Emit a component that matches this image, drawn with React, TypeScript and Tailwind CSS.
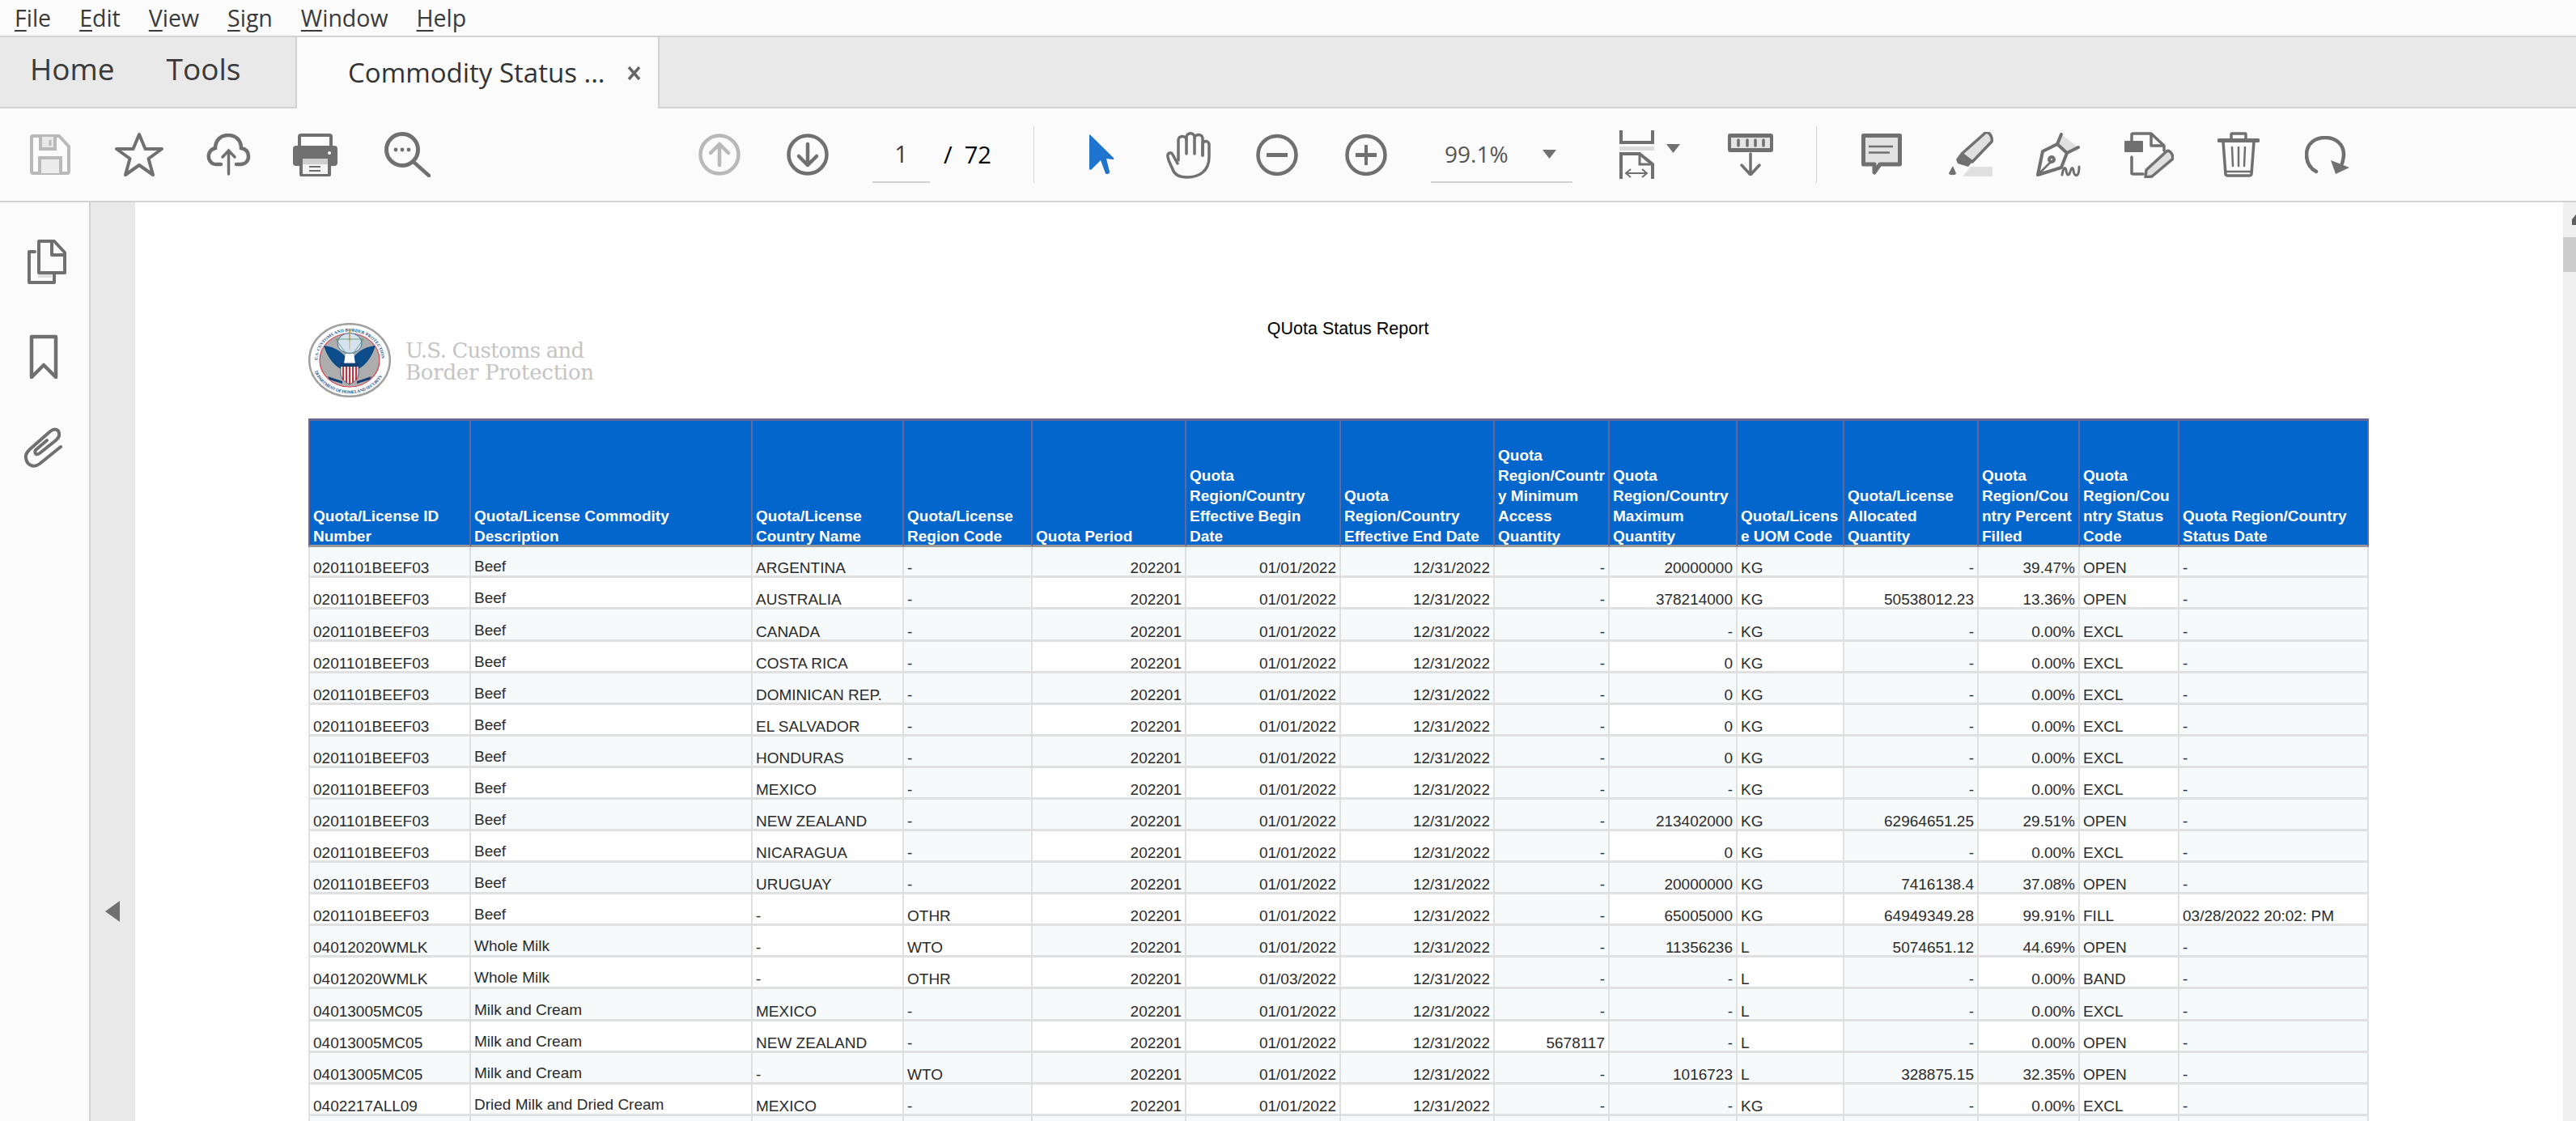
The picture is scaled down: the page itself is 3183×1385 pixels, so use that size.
import React from "react";

const G = "#707070";
const MENU = ["File", "Edit", "View", "Sign", "Window", "Help"];

const HEAD = [
  ["Quota/License ID", "Number"],
  ["Quota/License Commodity", "Description"],
  ["Quota/License", "Country Name"],
  ["Quota/License", "Region Code"],
  ["Quota Period"],
  ["Quota", "Region/Country", "Effective Begin", "Date"],
  ["Quota", "Region/Country", "Effective End Date"],
  ["Quota", "Region/Countr", "y Minimum", "Access", "Quantity"],
  ["Quota", "Region/Country", "Maximum", "Quantity"],
  ["Quota/Licens", "e UOM Code"],
  ["Quota/License", "Allocated", "Quantity"],
  ["Quota", "Region/Cou", "ntry Percent", "Filled"],
  ["Quota", "Region/Cou", "ntry Status", "Code"],
  ["Quota Region/Country", "Status Date"],
];
const WIDTHS = [201, 348, 187, 159, 190, 191, 190, 142, 158, 132, 166, 125, 123, 234];
const RIGHT = [4, 5, 6, 7, 8, 10, 11];
const HEIGHTS = [38, 39, 40, 39, 39, 39, 39, 39, 39, 39, 39, 39, 39, 39, 40, 39, 39, 39, 39];

const row = (id: string, name: string, country: string, region: string, begin: string, min: string, max: string, uom: string, alloc: string, pct: string, status: string, date = "-") => [
  id, name, country, region, "202201", begin, "12/31/2022", min, max, uom, alloc, pct, status, date,
];
const B = "0201101BEEF03";
const D = "01/01/2022";
const ROWS = [
  row(B, "Beef", "ARGENTINA", "-", D, "-", "20000000", "KG", "-", "39.47%", "OPEN"),
  row(B, "Beef", "AUSTRALIA", "-", D, "-", "378214000", "KG", "50538012.23", "13.36%", "OPEN"),
  row(B, "Beef", "CANADA", "-", D, "-", "-", "KG", "-", "0.00%", "EXCL"),
  row(B, "Beef", "COSTA RICA", "-", D, "-", "0", "KG", "-", "0.00%", "EXCL"),
  row(B, "Beef", "DOMINICAN REP.", "-", D, "-", "0", "KG", "-", "0.00%", "EXCL"),
  row(B, "Beef", "EL SALVADOR", "-", D, "-", "0", "KG", "-", "0.00%", "EXCL"),
  row(B, "Beef", "HONDURAS", "-", D, "-", "0", "KG", "-", "0.00%", "EXCL"),
  row(B, "Beef", "MEXICO", "-", D, "-", "-", "KG", "-", "0.00%", "EXCL"),
  row(B, "Beef", "NEW ZEALAND", "-", D, "-", "213402000", "KG", "62964651.25", "29.51%", "OPEN"),
  row(B, "Beef", "NICARAGUA", "-", D, "-", "0", "KG", "-", "0.00%", "EXCL"),
  row(B, "Beef", "URUGUAY", "-", D, "-", "20000000", "KG", "7416138.4", "37.08%", "OPEN"),
  row(B, "Beef", "-", "OTHR", D, "-", "65005000", "KG", "64949349.28", "99.91%", "FILL", "03/28/2022 20:02: PM"),
  row("04012020WMLK", "Whole Milk", "-", "WTO", D, "-", "11356236", "L", "5074651.12", "44.69%", "OPEN"),
  row("04012020WMLK", "Whole Milk", "-", "OTHR", "01/03/2022", "-", "-", "L", "-", "0.00%", "BAND"),
  row("04013005MC05", "Milk and Cream", "MEXICO", "-", D, "-", "-", "L", "-", "0.00%", "EXCL"),
  row("04013005MC05", "Milk and Cream", "NEW ZEALAND", "-", D, "5678117", "-", "L", "-", "0.00%", "OPEN"),
  row("04013005MC05", "Milk and Cream", "-", "WTO", D, "-", "1016723", "L", "328875.15", "32.35%", "OPEN"),
  row("0402217ALL09", "Dried Milk and Dried Cream", "MEXICO", "-", D, "-", "-", "KG", "-", "0.00%", "EXCL"),
  Array(14).fill(""),
];

// which body cells carry the pale tint: odd rows, plus dashes on even rows
const tinted = (r: number, c: number, v: string) => {
  if (c === 2 && (r === 11 || r === 13)) return false;
  if (r === 12 && (c === 2 || c === 3)) return false;
  return r % 2 === 0 || v === "-";
};

const Seal = () => (
  <svg width="102" height="92" viewBox="0 0 102 92">
    <defs>
      <path id="sealTop" d="M11.500 46 A39.500 35.500 0 0 1 90.500 46" />
      <path id="sealBottom" d="M7.700 60 A46 41 0 0 0 94.300 60" />
    </defs>
    <ellipse cx="51" cy="46" rx="49.800" ry="44.800" fill="#fff" stroke="#a0a0a0" strokeWidth="2.600" />
    <text fontFamily="Liberation Serif, serif" fontSize="5.600" fontWeight="700" fill="#1c5390">
      <textPath href="#sealTop" textLength="116">U.S. CUSTOMS AND BORDER PROTECTION</textPath>
    </text>
    <text fontFamily="Liberation Serif, serif" fontSize="5.400" fontWeight="700" fill="#1c5390">
      <textPath href="#sealBottom" textLength="102">DEPARTMENT OF HOMELAND SECURITY</textPath>
    </text>
    <ellipse cx="51" cy="46" rx="37" ry="33" fill="#adadad" stroke="#d8434f" strokeWidth="1.200" />
    <ellipse cx="51" cy="25" rx="15" ry="12.500" fill="#d4e3ef" stroke="#3c76a8" />
    <path d="M34 20 L68 20 L51 44Z" fill="none" stroke="#5e8a5a" strokeWidth="0.800" />
    <path d="M50 8 L52 8 L51 38Z" fill="#b59a45" />
    <path d="M19 28 C28 29 38 32 46 42 L44 58 C34 56 24 44 19 28Z" fill="#0c4c8a" />
    <path d="M83 28 C74 29 64 32 56 42 L58 58 C68 56 78 44 83 28Z" fill="#0c4c8a" />
    <path d="M46 38 L56 38 L58 50 L44 50Z" fill="#fff" />
    <path d="M40 50 H62 V62 C62 70 56 73 51 76 C46 73 40 70 40 62Z" fill="#fff" stroke="#123f74" strokeWidth="0.800" />
    <path d="M40 50 H62 V54 H40Z" fill="#123f74" />
    <path d="M43 54V71M47 54V74M51 54V76M55 54V74M59 54V71" stroke="#cf2f3a" strokeWidth="2" />
    <path d="M24 66 L42 72 L42 75 L26 70Z M78 66 L60 72 L60 75 L76 70Z" fill="#123f74" />
  </svg>
);

const Save = () => (
  <svg width="50" height="50" viewBox="0 0 50 50" fill="none" stroke="#b9b9b9" strokeWidth="4">
    <path d="M3 2H36L48 15V46A2 2 0 0 1 46 48H4A2 2 0 0 1 2 46V3Z" />
    <path d="M13 3V18H31V3" fill="#e8e8e8" />
    <path d="M25 7V14" strokeWidth="3" />
    <path d="M12 48V29H38V48" fill="#ececec" />
  </svg>
);

const Star = () => (
  <svg width="60" height="56" viewBox="0 0 60 56" fill="none" stroke={G} strokeWidth="4" strokeLinejoin="round">
    <path d="M30 3L37.500 21H58L41.500 33L47 53L30 41L13 53L18.500 33L2 21H22.500Z" />
  </svg>
);

const CloudUp = () => (
  <svg width="55" height="52" viewBox="0 0 55 52" fill="none" stroke={G} strokeWidth="4.500" strokeLinecap="round">
    <path d="M18 38H12C5 38 2 31 3 26C4 21 7 19 11 18C11 8 18 2 27 2C36 2 43 8 43 18C48 19 52 22 52 28C52 34 48 38 42 38H37" />
    <path d="M27.500 50V21M20 29L27.500 21L35 29" strokeWidth="3.500" />
  </svg>
);

const Print = () => (
  <svg width="55" height="53" viewBox="0 0 55 53">
    <rect x="8" y="2" width="39" height="20" rx="2" fill="#fff" stroke={G} strokeWidth="4" />
    <rect x="0" y="15" width="55" height="25" rx="4" fill={G} />
    <circle cx="45" cy="24" r="2" fill="#fff" />
    <rect x="8" y="29" width="39" height="24" rx="2" fill={G} />
    <rect x="12" y="31" width="31" height="7" fill="#cfcfcf" />
    <rect x="12" y="38" width="31" height="12" fill="#f4f4f4" />
    <path d="M20 41H34M20 46H34" stroke={G} strokeWidth="2" />
  </svg>
);

const Search = () => (
  <svg width="57" height="56" viewBox="0 0 57 56" fill="none" stroke={G} strokeWidth="5" strokeLinecap="round">
    <ellipse cx="22" cy="22" rx="19.500" ry="19.500" />
    <path d="M36 37L55 54" strokeWidth="4.500" />
    <circle cx="14" cy="22" r="2.400" fill={G} stroke="none" />
    <circle cx="22" cy="22" r="2.400" fill={G} stroke="none" />
    <circle cx="30" cy="22" r="2.400" fill={G} stroke="none" />
  </svg>
);

const CircleArrow = ({ up, color }: { up?: boolean; color: string }) => (
  <svg width="52" height="52" viewBox="0 0 52 52" fill="none" stroke={color} strokeWidth="4.500" strokeLinecap="round" strokeLinejoin="round">
    <circle cx="26" cy="26" r="23.500" />
    {up ? <path d="M26 39V13M15 24L26 13L37 24" /> : <path d="M26 13V39M15 28L26 39L37 28" />}
  </svg>
);

const Cursor = () => (
  <svg width="31" height="50" viewBox="0 0 31 50">
    <path d="M0 1C0 0 1 0 1.500 1L30 29C31 30.500 30 31 29 31L21 30L25 46C25.500 49 20 50.500 19.500 47L14 32L3 43C1.500 44.500 0 44 0 42Z" fill="#1f74cd" />
  </svg>
);

const HandIcon = () => (
  <svg width="55" height="59" viewBox="0 0 55 59" fill="none" stroke={G} strokeWidth="3.500" strokeLinecap="round" strokeLinejoin="round">
    <path d="M14 40L8 29C6 25 1 27 2 32C3 38 6 42 8 47C10 54 17 57 26 57C40 57 53 50 53 32V17C53 11 45 11 45 17V30" />
    <path d="M45 30V9C45 3 35 3 35 9V28" />
    <path d="M35 8C35 1 25 1 25 8V28" />
    <path d="M25 11C25 5 15 5 15 11V36" />
  </svg>
);

const CircleZoom = ({ plus }: { plus?: boolean }) => (
  <svg width="52" height="53" viewBox="0 0 52 53" fill="none" stroke={G} strokeWidth="4.500">
    <circle cx="26" cy="26.500" r="23.500" />
    <path d="M13 26.500H39" strokeWidth="5" />
    {plus && <path d="M26 14V39" strokeWidth="4" />}
  </svg>
);

const Fit = () => (
  <svg width="43" height="60" viewBox="0 0 43 60" fill="none" stroke={G} strokeWidth="4">
    <path d="M2 0V15H41V0" />
    <rect x="0" y="20" width="43" height="5" fill="#dcdcdc" stroke="none" />
    <path d="M2 60V29H25L41 42V60" />
    <path d="M25 29V42H41" strokeWidth="3" />
    <path d="M9 53H33M14 48L8 53L14 58M28 48L34 53L28 58" strokeWidth="2" />
  </svg>
);

const Caret = () => (
  <svg width="17" height="11" viewBox="0 0 17 11">
    <path d="M0 0H17L8.500 11Z" fill={G} />
  </svg>
);

const Ruler = () => (
  <svg width="56" height="52" viewBox="0 0 56 52" fill="none">
    <rect x="0" y="0" width="56" height="23" rx="3" fill={G} />
    <rect x="4" y="5" width="48" height="13" fill="#e4e4e4" />
    <path d="M13 8V15M24 8V15M34 8V15M44 8V15" stroke={G} strokeWidth="3.500" strokeLinecap="round" />
    <path d="M28 25V50M17 39L28 51L39 39" stroke={G} strokeWidth="3.500" strokeLinecap="round" strokeLinejoin="round" />
  </svg>
);

const Comment = () => (
  <svg width="50" height="52" viewBox="0 0 50 52" fill="none">
    <path d="M2.500 2.500H47.500V38H23L16 48V38H2.500Z" fill="#e2e2e2" stroke={G} strokeWidth="5" strokeLinejoin="round" />
    <path d="M9 16H39M9 23.500H35" stroke={G} strokeWidth="2.500" />
  </svg>
);

const Highlight = () => (
  <svg width="56" height="56" viewBox="0 0 56 56" fill="none">
    <path d="M18 55H55V43H28Z" fill="#e0e0e0" />
    <path d="M44 3C46 0 50 0 52 3C54 6 55 9 54 12L30 37L17 27Z" fill="#e0e0e0" stroke={G} strokeWidth="3.500" strokeLinejoin="round" />
    <path d="M15 27L30 37L25 43L12 39L10 34Z" fill={G} />
    <path d="M6 42L1 51C1 54 10 54 10 51Z" fill={G} />
  </svg>
);

const Pen = () => (
  <svg width="57" height="55" viewBox="0 0 57 55" fill="none" stroke={G} strokeWidth="4" strokeLinejoin="round" strokeLinecap="round">
    <path d="M31 2L52 18L38 25L27 15Z" fill="#e0e0e0" stroke="none" />
    <path d="M31 2L26 14L8 23L2 52L31 43L38 25L52 18" />
    <path d="M26 14L38 25" />
    <path d="M2 52L18 36" strokeWidth="2.500" />
    <circle cx="19" cy="33" r="3" />
    <path d="M32 52C33 46 35 40 37 46C37 50 39 54 41 51C43 46 44 40 46 46C46 50 48 54 51 52C53 50 53 44 53 42" strokeWidth="3" />
  </svg>
);

const EditDoc = () => (
  <svg width="61" height="57" viewBox="0 0 61 57" fill="none" stroke={G} strokeWidth="3.500" strokeLinecap="round" strokeLinejoin="round">
    <path d="M9 11V3C9 2 10 2 11 2H33L49 17V23" />
    <path d="M33 3V17H48" />
    <rect x="0" y="11" width="23" height="14" rx="1" fill={G} stroke="none" />
    <path d="M9 31V51C9 52 10 52 11 52H23" />
    <path d="M52 24C55 22 60 26 60 33L34 55L26 56L27 47Z" fill="#e0e0e0" />
  </svg>
);

const Trash = () => (
  <svg width="52" height="56" viewBox="0 0 52 56" fill="none" stroke={G} strokeLinecap="round" strokeLinejoin="round">
    <path d="M17 9V3C17 2 18 2 18 2H34C35 2 35 2 35 3V9" strokeWidth="3.500" />
    <path d="M2 10.500H50" strokeWidth="5" />
    <path d="M7 12L10 52C10 53 11 54 12 54H40C41 54 42 53 42 52L45 12" strokeWidth="3.500" />
    <path d="M18 19L19 42M26 19V42M34 19L33 42" strokeWidth="2.500" />
    <path d="M11 49H41" strokeWidth="2.500" />
  </svg>
);

const Rotate = () => (
  <svg width="55" height="47" viewBox="0 0 55 47" fill="none" stroke={G} strokeWidth="4.500" strokeLinecap="round">
    <path d="M14 44C3 38 2 28 2 23C2 10 12 2 25 2C38 2 48 10 48 23C48 27 47 30 46 34" />
    <path d="M32 30L55 39L38 47Z" fill={G} stroke="none" />
  </svg>
);

const Pages = () => (
  <svg width="48" height="55" viewBox="0 0 48 55" fill="none" stroke={G} strokeWidth="4" strokeLinejoin="round">
    <path d="M9 15H2V53H33V43" strokeLinecap="round" />
    <rect x="13" y="42" width="17" height="5" fill="#dfdfdf" stroke="none" />
    <path d="M14 2H33L46 16V41H14Z" />
    <path d="M30 3V19H46" />
  </svg>
);

const Mark = () => (
  <svg width="36" height="55" viewBox="0 0 36 55" fill="none" stroke={G} strokeWidth="4.500" strokeLinecap="round" strokeLinejoin="round">
    <path d="M3 53V3H33V53L18 38Z" />
  </svg>
);

const Clip = () => (
  <svg width="48" height="51" viewBox="0 0 48 51" fill="none" stroke={G} strokeWidth="4" strokeLinecap="round">
    <path d="M46 25L20 46C12 52 4 47 3 39C2 34 5 31 8 28L33 6C38 2 44 3 44 9C45 13 42 15 40 17L20 33C16 36 13 33 15 29L29 17" />
  </svg>
);

const Sep = () => <div className="h-[70px] w-px bg-[#d2d2d2]" />;

export default function App() {
  return (
    <div className="h-[1385px] w-[3183px] overflow-hidden bg-white font-['Open_Sans',sans-serif] text-[#3a3a3a] flex flex-col">
      {/* menu */}
      <div className="h-[46px] shrink-0 bg-[#fbfbfb] border-b-2 border-[#d2d2d2] pl-[18px] flex items-center gap-[35px] text-[28.5px]">
        {MENU.map((m) => (
          <span key={m}>
            <span className="underline underline-offset-4">{m[0]}</span>
            {m.slice(1)}
          </span>
        ))}
      </div>

      {/* tabs */}
      <div className="h-[88px] shrink-0 bg-[#e9e9e9] border-b-2 border-[#d2d2d2] flex">
        <div className="w-[365px] flex items-center pl-[37px] gap-[64px] text-[37px] pb-[8px]">
          <span>Home</span>
          <span>Tools</span>
        </div>
        <div className="w-[450px] h-[88px] bg-[#fbfbfb] border-x-2 border-[#d2d2d2] flex items-center pl-[63px] text-[33px] text-[#333]">
          <span className="w-[345px] whitespace-nowrap">Commodity Status ...</span>
          <svg width="17" height="17" viewBox="0 0 17 17" stroke="#666" strokeWidth="3.500">
            <path d="M2 1L15 16M15 1L2 16" />
          </svg>
        </div>
      </div>

      {/* toolbar */}
      <div className="h-[116px] shrink-0 bg-[#fbfbfb] border-b-2 border-[#d2d2d2] flex items-center pl-[37px]">
        <Save />
        <div className="ml-[55px]"><Star /></div>
        <div className="ml-[53px]"><CloudUp /></div>
        <div className="ml-[52px]"><Print /></div>
        <div className="ml-[58px]"><Search /></div>
        <div className="ml-[331px]"><CircleArrow up color="#b9b9b9" /></div>
        <div className="ml-[57px]"><CircleArrow color={G} /></div>
        <div className="ml-[54px] w-[71px] h-[70px] border-b-2 border-[#d2d2d2] flex items-center justify-center text-[29px]">1</div>
        <div className="ml-[17px] w-[61px] text-[29px] text-black whitespace-nowrap">/&nbsp;&nbsp;72</div>
        <div className="ml-[50px]"><Sep /></div>
        <div className="ml-[68px]"><Cursor /></div>
        <div className="ml-[64px]"><HandIcon /></div>
        <div className="ml-[56px]"><CircleZoom /></div>
        <div className="ml-[58px]"><CircleZoom plus /></div>
        <div className="ml-[54px] w-[175px] h-[70px] border-b-2 border-[#d2d2d2] flex items-center pl-[17px] text-[28px] text-[#555]">
          <span className="w-[121px]">99.1%</span>
          <Caret />
        </div>
        <div className="ml-[58px]"><Fit /></div>
        <div className="ml-[15px] -mt-[16px]"><Caret /></div>
        <div className="ml-[59px]"><Ruler /></div>
        <div className="ml-[53px]"><Sep /></div>
        <div className="ml-[55px]"><Comment /></div>
        <div className="ml-[57px]"><Highlight /></div>
        <div className="ml-[53px]"><Pen /></div>
        <div className="ml-[52px]"><EditDoc /></div>
        <div className="ml-[54px]"><Trash /></div>
        <div className="ml-[56px]"><Rotate /></div>
      </div>

      {/* body */}
      <div className="flex-1 min-h-0 flex">
        <div className="w-[112px] shrink-0 bg-[#fbfbfb] border-r-2 border-[#d2d2d2] flex flex-col items-start">
          <div className="ml-[34px] mt-[46px]"><Pages /></div>
          <div className="ml-[36px] mt-[62px]"><Mark /></div>
          <div className="ml-[29px] mt-[59px]"><Clip /></div>
        </div>
        <div className="w-[55px] shrink-0 bg-[#e9e9e9] pt-[863px] pl-[18px]">
          <svg width="18" height="26" viewBox="0 0 18 26">
            <path d="M18 0V26L0 13Z" fill={G} />
          </svg>
        </div>

        {/* document page */}
        <div className="w-[3000px] shrink-0 bg-white pl-[214px] pt-[149px] font-['Liberation_Sans',Arial,sans-serif]">
          <div className="flex items-start h-[92px] mb-[26px]">
            <Seal />
            <div className="ml-[18px] mt-[21px] font-['DejaVu_Serif',serif] text-[26px] leading-[27px] text-[#c4c4c4] whitespace-nowrap">
              <div className="tracking-[-0.75px]">U.S. Customs and</div>
              <div className="tracking-[-0.25px]">Border Protection</div>
            </div>
            <div className="ml-[832px] -mt-[4px] text-[21.5px] leading-[22px] text-black whitespace-nowrap">QUota Status Report</div>
          </div>

          <table className="table-fixed border-separate border-spacing-0 w-[2546px] text-[19px]">
            <colgroup>
              {WIDTHS.map((w, i) => (
                <col key={i} style={{ width: w }} />
              ))}
            </colgroup>
            <thead>
              <tr className="h-[159px]">
                {HEAD.map((lines, i) => (
                  <th
                    key={i}
                    className={`align-bottom text-left font-bold leading-[25px] text-white bg-[#0366cc] border-t-[3px] border-t-[#666699] border-b-[3px] border-b-[#999999] border-r-2 border-r-[#666699] px-[4px] whitespace-nowrap overflow-hidden ${i === 0 ? "border-l-2 border-l-[#666699]" : ""}`}
                  >
                    <div className="translate-y-[2px]">
                      {lines.map((l) => (
                        <div key={l}>{l}</div>
                      ))}
                    </div>
                  </th>
                ))}
              </tr>
            </thead>
            <tbody>
              {ROWS.map((cells, r) => (
                <tr key={r} style={{ height: HEIGHTS[r] }}>
                  {cells.map((v, c) => (
                    <td
                      key={c}
                      className={`align-bottom leading-[19px] text-[#2b2b2b] border-b-[3px] border-b-[#e0e0e0] border-r-2 border-r-[#e0e0e0] px-[4px] whitespace-nowrap overflow-hidden ${c === 0 ? "border-l-2 border-l-[#e0e0e0]" : ""} ${c === 1 ? "pb-[2px]" : ""} ${RIGHT.includes(c) ? "text-right" : "text-left"} ${tinted(r, c, v) ? "bg-[#f7fafb]" : "bg-white"}`}
                    >
                      {v}
                    </td>
                  ))}
                </tr>
              ))}
            </tbody>
          </table>
        </div>

        {/* scrollbar */}
        <div className="w-[16px] shrink-0 bg-[#f0f0f0] flex flex-col">
          <svg width="16" height="43" viewBox="0 0 16 43" className="shrink-0">
            <path d="M11 28V21L16 15V28Z" fill="#5f5f5f" />
          </svg>
          <div className="h-[43px] bg-[#cdcdcd]" />
        </div>
      </div>
    </div>
  );
}
